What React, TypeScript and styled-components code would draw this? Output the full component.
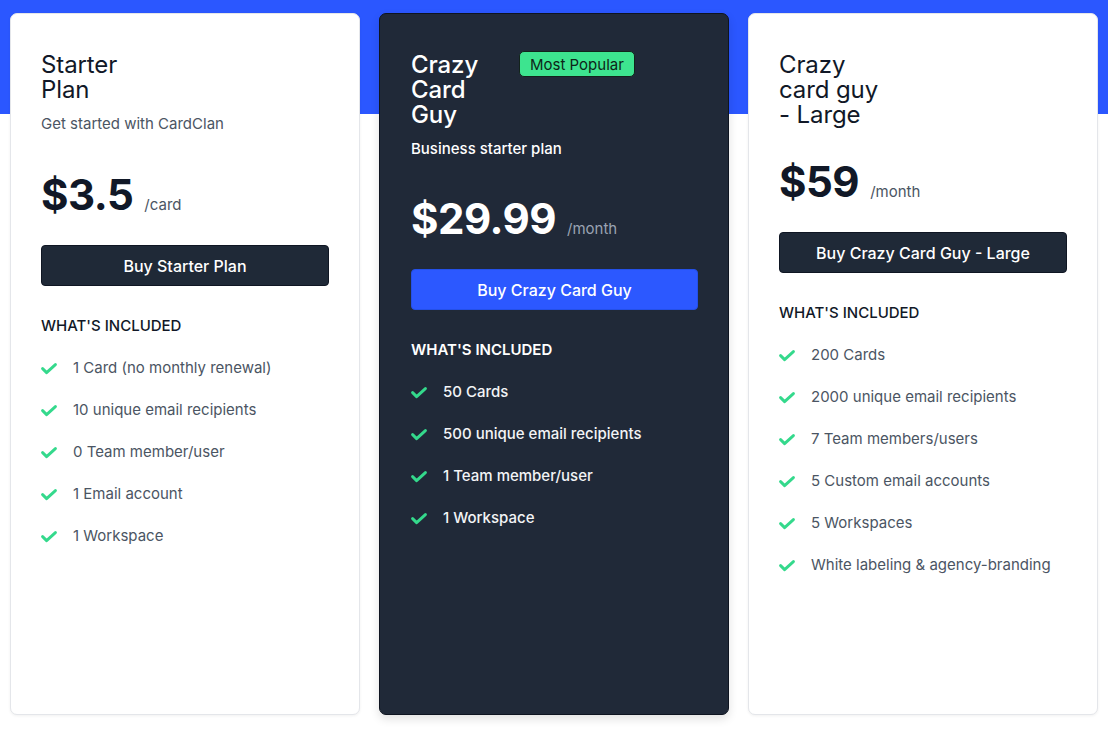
import React from "react";
import styled, { createGlobalStyle } from "styled-components";

const Global = createGlobalStyle`
  * { box-sizing: border-box; }
  html, body { margin: 0; padding: 0; background: #ffffff; }
  body { font-family: Inter, "Noto Sans", sans-serif; -webkit-font-smoothing: antialiased; }
`;

const Page = styled.div`
  width: 1108px;
  height: 729px;
  background: linear-gradient(#2b57ff 0, #2b57ff 114px, #ffffff 114px);
  padding: 13px 10px 0 10px;
`;

const Grid = styled.div`
  display: grid;
  grid-template-columns: repeat(3, 350px);
  column-gap: 19px;
  align-items: stretch;
`;

const Card = styled.div<{ $dark?: boolean }>`
  height: 702px;
  border-radius: 7px;
  padding: ${(p) => (p.$dark ? "38px 30px 0 31px" : "38px 30px 0 30px")};
  background: ${(p) => (p.$dark ? "#202938" : "#ffffff")};
  border: 1px solid ${(p) => (p.$dark ? "#0e1420" : "#e4e6ea")};
  box-shadow: ${(p) =>
    p.$dark ? "0 4px 10px rgba(0,0,0,0.12)" : "0 1px 3px rgba(0,0,0,0.06)"};
  display: flex;
  flex-direction: column;
`;

const HeaderRow = styled.div`
  display: flex;
  align-items: flex-start;
`;

const Title = styled.h3<{ $dark?: boolean }>`
  margin: 0;
  width: 108px;
  flex-shrink: 0;
  font-size: 24px;
  line-height: 25px;
  white-space: nowrap;
  font-weight: ${(p) => (p.$dark ? 500 : 400)};
  color: ${(p) => (p.$dark ? "#ffffff" : "#111827")};
  letter-spacing: -0.1px;
`;

const Badge = styled.span`
  margin-top: -1px;
  height: 26px;
  padding: 0 10px;
  display: inline-flex;
  align-items: center;
  border-radius: 5px;
  background: #3de48f;
  border: 1px solid #12231b;
  color: #0d2418;
  font-size: 15px;
  font-weight: 400;
  white-space: nowrap;
`;

const Subtitle = styled.p<{ $dark?: boolean }>`
  margin: 12px 0 0 0;
  font-size: 15px;
  line-height: 20px;
  font-weight: ${(p) => (p.$dark ? 500 : 400)};
  color: ${(p) => (p.$dark ? "#ffffff" : "#4b5563")};
`;

const PriceRow = styled.div<{ $gap: number }>`
  margin-top: ${(p) => p.$gap}px;
  display: flex;
  align-items: baseline;
  gap: 11px;
`;

const Price = styled.span<{ $dark?: boolean }>`
  font-size: 42px;
  line-height: 44px;
  font-weight: 700;
  letter-spacing: -0.5px;
  color: ${(p) => (p.$dark ? "#ffffff" : "#111827")};
`;

const Per = styled.span<{ $dark?: boolean }>`
  font-size: 15px;
  color: ${(p) => (p.$dark ? "#9aa3b2" : "#4b5563")};
`;

const BuyButton = styled.button<{ $primary?: boolean }>`
  margin-top: 28px;
  width: 100%;
  height: 41px;
  border-radius: 4px;
  border: 1px solid ${(p) => (p.$primary ? "#2450e8" : "#0f1623")};
  background: ${(p) => (p.$primary ? "#2c58ff" : "#1f2937")};
  color: #ffffff;
  font-family: Inter, "Noto Sans", sans-serif;
  font-size: 16px;
  font-weight: 500;
  cursor: pointer;
`;

const Included = styled.h4<{ $dark?: boolean }>`
  margin: 31px 0 0 0;
  font-size: 15px;
  line-height: 18px;
  font-weight: ${(p) => (p.$dark ? 600 : 500)};
  text-transform: uppercase;
  color: ${(p) => (p.$dark ? "#ffffff" : "#111827")};
`;

const List = styled.ul`
  list-style: none;
  margin: 21px 0 0 0;
  padding: 0;
  display: flex;
  flex-direction: column;
  gap: 18px;
`;

const Item = styled.li<{ $dark?: boolean }>`
  display: flex;
  align-items: center;
  height: 24px;
  font-size: 15px;
  line-height: 24px;
  font-weight: ${(p) => (p.$dark ? 500 : 400)};
  color: ${(p) => (p.$dark ? "#f3f4f6" : "#4b5563")};
`;

const CheckIcon = styled.svg`
  width: 16px;
  height: 12px;
  flex-shrink: 0;
  margin-right: 16px;
  margin-top: 2px;
  fill: none;
  stroke: #34d98c;
  stroke-width: 2.9;
  stroke-linecap: round;
  stroke-linejoin: round;
`;

const Check = () => (
  <CheckIcon viewBox="0 0 16 12" aria-hidden="true">
    <path d="M1.6 5.6 L5.6 9.6 L14.4 1.6" />
  </CheckIcon>
);

type Plan = {
  title: string[];
  subtitle?: string;
  price: string;
  per: string;
  button: string;
  features: string[];
  dark?: boolean;
  badge?: string;
  priceGap: number;
};

const plans: Plan[] = [
  {
    title: ["Starter", "Plan"],
    subtitle: "Get started with CardClan",
    price: "$3.5",
    per: "/card",
    button: "Buy Starter Plan",
    features: [
      "1 Card (no monthly renewal)",
      "10 unique email recipients",
      "0 Team member/user",
      "1 Email account",
      "1 Workspace",
    ],
    priceGap: 39,
  },
  {
    title: ["Crazy", "Card", "Guy"],
    subtitle: "Business starter plan",
    price: "$29.99",
    per: "/month",
    button: "Buy Crazy Card Guy",
    features: [
      "50 Cards",
      "500 unique email recipients",
      "1 Team member/user",
      "1 Workspace",
    ],
    dark: true,
    badge: "Most Popular",
    priceGap: 38,
  },
  {
    title: ["Crazy", "card guy", "- Large"],
    price: "$59",
    per: "/month",
    button: "Buy Crazy Card Guy - Large",
    features: [
      "200 Cards",
      "2000 unique email recipients",
      "7 Team members/users",
      "5 Custom email accounts",
      "5 Workspaces",
      "White labeling & agency-branding",
    ],
    priceGap: 33,
  },
];

export default function App() {
  return (
    <>
      <Global />
      <Page>
        <Grid>
          {plans.map((p) => (
            <Card key={p.button} $dark={p.dark}>
              <HeaderRow>
                <Title $dark={p.dark}>
                  {p.title.map((t, i) => (
                    <React.Fragment key={t}>
                      {i > 0 && <br />}
                      {t}
                    </React.Fragment>
                  ))}
                </Title>
                {p.badge && <Badge>{p.badge}</Badge>}
              </HeaderRow>
              {p.subtitle && <Subtitle $dark={p.dark}>{p.subtitle}</Subtitle>}
              <PriceRow $gap={p.priceGap}>
                <Price $dark={p.dark}>{p.price}</Price>
                <Per $dark={p.dark}>{p.per}</Per>
              </PriceRow>
              <BuyButton $primary={p.dark}>{p.button}</BuyButton>
              <Included $dark={p.dark}>What's included</Included>
              <List>
                {p.features.map((f) => (
                  <Item key={f} $dark={p.dark}>
                    <Check />
                    {f}
                  </Item>
                ))}
              </List>
            </Card>
          ))}
        </Grid>
      </Page>
    </>
  );
}
